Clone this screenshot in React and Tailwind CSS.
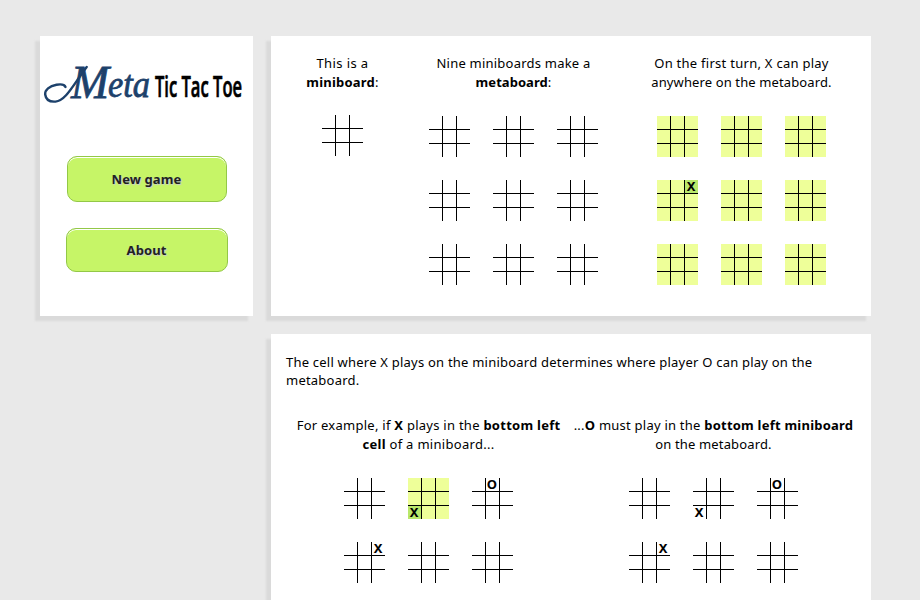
const line = "block whitespace-nowrap";

function Mini({ lit = false, marks = {} }) {
  return (
    <div
      className={`grid size-[41px] grid-cols-[13px_13px_13px] grid-rows-[13px_13px_13px] gap-px ${
        lit ? "bg-[#eeff99]" : "bg-white"
      }`}
    >
      {Array.from({ length: 9 }, (_, i) => {
        const right = i % 3 < 2;
        const bottom = i < 6;
        return (
          <div
            key={i}
            className={`box-content flex size-[13px] items-center justify-center border-black text-[13px] leading-[13px] font-bold ${
              right ? "border-r" : ""
            } ${bottom ? "border-b" : ""} ${lit && marks[i] ? "bg-[#b9e86b]" : ""}`}
          >
            {marks[i] && <span className="-ml-px">{marks[i]}</span>}
          </div>
        );
      })}
    </div>
  );
}

function Meta({ boards = {}, lit = false }) {
  return (
    <div className="grid w-[169px] grid-cols-3 gap-[23px]">
      {Array.from({ length: 9 }, (_, i) => (
        <Mini key={i} lit={lit || boards[i]?.lit} marks={boards[i]?.marks} />
      ))}
    </div>
  );
}

function Logo() {
  return (
    <svg className="block h-[52px] w-[213px] overflow-visible" viewBox="0 0 213 52" role="img" aria-label="Meta Tic Tac Toe">
      <path
        d="M25.5 26C24.5 23.5 21 23 16.5 23.8C9.5 25 4.7 29 5.2 33.5C6 39.5 10.5 41 15.5 40.6C26 39.5 33 24 46.7 6"
        fill="none"
        stroke="#1d416b"
        strokeWidth="2.4"
        strokeLinecap="round"
      />
      <g fill="#1d416b" stroke="#1d416b" strokeWidth="0.8" fontStyle="italic" fontFamily="'Liberation Serif', serif">
        <text x="31" y="37" textLength="38" lengthAdjust="spacingAndGlyphs" fontSize="47">M</text>
        <text x="68" y="36" textLength="42" lengthAdjust="spacingAndGlyphs" fontSize="38">eta</text>
      </g>
      <g transform="translate(115 36) scale(0.592 1)">
        <text fill="#000" stroke="#000" strokeWidth="0.7" fontSize="28" fontWeight="600" fontFamily="'Open Sans', sans-serif">Tic Tac Toe</text>
      </g>
    </svg>
  );
}

const panel = "bg-white shadow-[-5px_5px_2px_#dadada]";
const button =
  "flex items-center justify-center rounded-[10px] border border-[#93c847] bg-[#c6f567] text-[13px] font-bold tracking-[0.1px] text-[#222] shadow-[inset_0_1px_0_#fff] [text-shadow:1px_1px_1px_#ccc]";

const example = { 1: { marks: { 6: "X" } }, 2: { marks: { 1: "O" } }, 3: { marks: { 2: "X" } } };

export default function App() {
  return (
    <div className="flex h-[600px] w-[920px] items-start gap-[18px] overflow-hidden bg-[#e9e9e9] pt-9 pl-10 font-['Noto_Sans',sans-serif] text-[13px] leading-[19px] text-black">
      <aside className={`flex h-[280px] w-[213px] shrink-0 flex-col items-center pt-[25px] ${panel}`}>
        <Logo />
        <button className={`mt-[43px] ml-px h-[46px] w-[160px] ${button}`}><span className="-ml-px">New game</span></button>
        <button className={`mt-[26px] ml-px h-[44px] w-[162px] ${button}`}><span className="-ml-px">About</span></button>
      </aside>
      <main className="flex w-[600px] shrink-0 flex-col gap-[18px]">
        <section className={`flex h-[280px] pt-[18px] ${panel}`}>
          <div className="flex w-[143px] flex-col items-center text-center">
            <p>
              <span className={`${line} tracking-[0.4px]`}>This is a</span>
              <span className={`${line} tracking-[0.2px]`}><b>miniboard</b>:</span>
            </p>
            <div className="mt-[23px]"><Mini /></div>
          </div>
          <div className="flex w-[199px] flex-col items-center text-center">
            <p>
              <span className={`${line} tracking-[0.22px]`}>Nine miniboards make a</span>
              <span className={`${line} tracking-[0.05px]`}><b>metaboard</b>:</span>
            </p>
            <div className="mt-6"><Meta /></div>
          </div>
          <div className="flex w-[257px] flex-col items-center text-center">
            <p>
              <span className={`${line} tracking-[0.27px]`}>On the first turn, X can play</span>
              <span className={`${line} tracking-[0.12px]`}>anywhere on the metaboard.</span>
            </p>
            <div className="mt-6"><Meta lit boards={{ 3: { marks: { 2: "X" } } }} /></div>
          </div>
        </section>
        <section className={`h-[400px] shrink-0 pt-[19px] ${panel}`}>
          <p className="pl-[15px] leading-[18px] tracking-[0.22px]">
            <span className={line}>The cell where X plays on the miniboard determines where player O can play on the</span>
            <span className={line}>metaboard.</span>
          </p>
          <div className="mt-[27px] flex pl-[15px]">
            <div className="flex w-[285px] flex-col items-center text-center">
              <p>
                <span className={`${line} tracking-[0.26px]`}>For example, if <b>X</b> plays in the <b>bottom left</b></span>
                <span className={`${line} tracking-[0.3px]`}><b>cell</b> of a miniboard...</span>
              </p>
              <div className="mt-6"><Meta boards={{ ...example, 1: { lit: true, marks: { 6: "X" } } }} /></div>
            </div>
            <div className="flex w-[285px] flex-col items-center text-center">
              <p>
                <span className={`${line} tracking-[0.23px]`}>...<b>O</b> must play in the <b>bottom left miniboard</b></span>
                <span className={`${line} tracking-[0.15px]`}>on the metaboard.</span>
              </p>
              <div className="mt-6"><Meta boards={example} /></div>
            </div>
          </div>
        </section>
      </main>
    </div>
  );
}
